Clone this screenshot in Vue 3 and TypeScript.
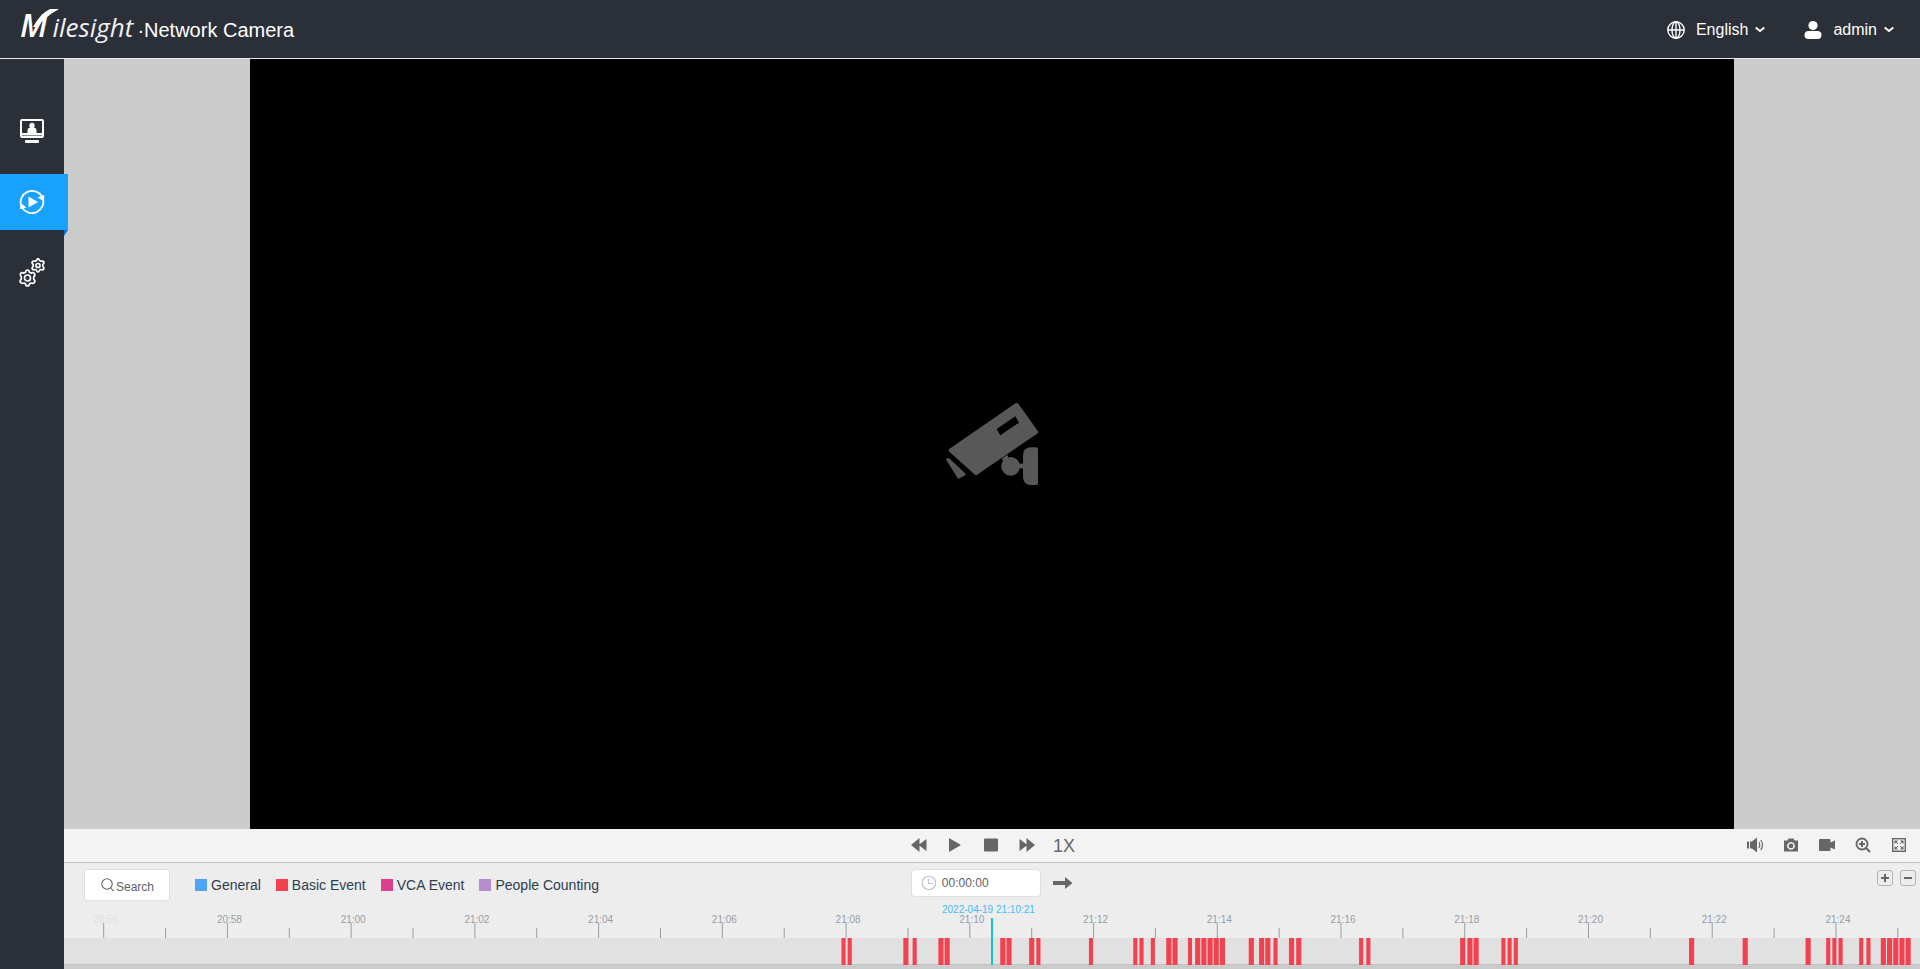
<script setup lang="ts">
import { ref } from 'vue'

interface LegendItem {
  label: string
  color: string
}

interface Tick {
  at: number
  major: boolean
  label: string
}

const legend: LegendItem[] = [
  { label: 'General', color: '#4fa5f3' },
  { label: 'Basic Event', color: '#f2424f' },
  { label: 'VCA Event', color: '#dd3f8f' },
  { label: 'People Counting', color: '#b68ed0' },
]

const language = 'English'
const user = 'admin'
const seekTime = ref('00:00:00')

// The timeline spans thirty minutes, centred on the end of the current second.
const span = 1800
const current = 21 * 3600 + 10 * 60 + 22
const start = current - span / 2

const percent = (seconds: number): string => `${(seconds / span) * 100}%`
const pad = (n: number): string => String(n).padStart(2, '0')

const ticks: Tick[] = []
for (let t = Math.ceil(start / 60) * 60; t < start + span; t += 60) {
  const minutes = t / 60
  ticks.push({
    at: t - start,
    major: minutes % 2 === 0,
    label: `${pad(Math.floor(minutes / 60))}:${pad(minutes % 60)}`,
  })
}

// Recorded events: [seconds from the left edge, duration in seconds]
const events: [number, number][] = [
  [754, 4], [760, 4], [814, 5], [823, 4], [848, 5], [854, 5], [908, 5], [914, 5],
  [936, 5], [943, 4], [994, 4], [1037, 4], [1043, 4], [1054, 4], [1069, 5], [1075, 5],
  [1090, 4], [1097, 5], [1103, 5], [1109, 5], [1115, 5], [1121, 5], [1149, 5],
  [1159, 5], [1165, 5], [1173, 4], [1188, 5], [1195, 5], [1256, 4], [1263, 4],
  [1354, 5], [1361, 5], [1367, 5], [1394, 4], [1400, 4], [1406, 4], [1576, 5],
  [1628, 5], [1689, 5], [1709, 4], [1715, 4], [1721, 4], [1741, 4], [1748, 4],
  [1762, 5], [1768, 5], [1774, 5], [1780, 5], [1786, 5],
]
</script>

<template>
  <div class="page">
    <header class="header">
      <div class="brand">
        <span class="logo">
          <span class="logo-initial">M</span>
          <svg class="swoosh" width="26" height="18" viewBox="0 0 26 18" fill="#fff"><path d="M0 18Q7 5 17 0h9Q13 7 4 18z" /></svg>
          <span>ilesight</span>
        </span>
        <span class="product">·Network Camera</span>
      </div>
      <div class="account">
        <button type="button" class="menu">
          <svg class="globe" width="18" height="18" viewBox="0 0 18 18" fill="none" stroke="#fff" stroke-width="1.4">
            <circle cx="9" cy="9" r="8.2" />
            <ellipse cx="9" cy="9" rx="4" ry="8.2" />
            <path d="M9 1v16M1 9h16" />
          </svg>
          <span>{{ language }}</span>
          <svg width="10" height="8" viewBox="0 0 10 8" fill="none" stroke="#fff" stroke-width="2"><path d="M.7 1.500 5 5 9.300 1.500" /></svg>
        </button>
        <button type="button" class="menu">
          <svg class="person" width="18" height="18" viewBox="0 0 18 18" fill="#fff">
            <circle cx="9" cy="4.6" r="4.6" />
            <rect x="0.5" y="10" width="17" height="8" rx="4" />
          </svg>
          <span>{{ user }}</span>
          <svg width="10" height="8" viewBox="0 0 10 8" fill="none" stroke="#fff" stroke-width="2"><path d="M.7 1.500 5 5 9.300 1.500" /></svg>
        </button>
      </div>
    </header>

    <div class="body">
      <nav class="sidebar">
        <a href="#live" class="nav-item" aria-label="Live view">
          <svg width="26" height="26" viewBox="0 0 26 26">
            <rect x="2" y="2" width="22" height="17" rx="1" fill="none" stroke="#fff" stroke-width="2" />
            <path d="M2 16.5h22" stroke="#fff" stroke-width="3" />
            <path d="M3 17.5h20" stroke="#8b8d92" stroke-width="1" />
            <circle cx="13" cy="7.4" r="2.6" fill="#fff" />
            <path d="M8.5 16v-3q0-3.4 3-3.4h3q3 0 3 3.4v3z" fill="#fff" />
            <rect x="6" y="22" width="14" height="3" rx="1" fill="#fff" />
          </svg>
        </a>
        <a href="#playback" class="nav-item active" aria-label="Playback">
          <svg width="26" height="26" viewBox="0 0 26 26">
            <path d="M2.200 17A11.500 11.500 0 0 1 23 7.500M23.800 9A11.500 11.500 0 0 1 3 18.500" fill="none" stroke="#fff" stroke-width="1.800" />
            <path d="M18.500 8.500 25.500 6 24.600 12zM1 20 1.800 14 7.500 18.400z" fill="#fff" />
            <path d="M9.500 7.500v11l9.500-5.500z" fill="#fff" />
          </svg>
        </a>
        <a href="#settings" class="nav-item" aria-label="Settings">
          <svg width="28" height="30" viewBox="0 0 28 30" fill="none" stroke="#fff" stroke-width="1.700" stroke-linejoin="round">
            <path d="M9.500 12q1.700 0 2 2.300l1.500.8q2.500-1 3.500.5t-.8 3.300v2.200q1.700 1.600.8 3.200t-3.500.700l-1.500.8q-.3 2.200-2 2.200t-2-2.200L6 25q-2.500.9-3.500-.7t.8-3.200v-2.200Q1.600 17.200 2.500 15.600t3.500-.5l1.500-.8q.3-2.300 2-2.300z" />
            <circle cx="9.500" cy="20" r="3" />
            <path d="M20 .8q1.200 0 1.500 1.700l1.500.8q2-.7 2.700.5t-.9 2.700v1.800q1.600 1.400.9 2.700t-2.700.5l-1.500.8q-.3 1.700-1.500 1.700t-1.500-1.700l-1.500-.8q-2 .7-2.700-.5t.9-2.700V6.500q-1.600-1.400-.9-2.700t2.700-.5l1.500-.8q.3-1.700 1.500-1.700z" />
            <circle cx="20" cy="7.500" r="2" />
          </svg>
        </a>
      </nav>

      <main class="main">
        <section class="stage">
          <div class="video">
            <svg width="94" height="84" viewBox="75 66 282 252" fill="#585858" stroke="#585858" stroke-linejoin="round">
              <path d="M290 75 348 156 168 279 92 211z" stroke-width="12" />
              <path d="M230 147 286 109 297 128 241 166z" fill="#000" stroke="none" />
              <path d="M81 238h5l48 45-18 10z" stroke-width="6" />
              <path d="M245 236 262 224 268 240 254 250z" stroke="none" />
              <circle cx="272" cy="259" r="28" stroke="none" />
              <path d="M296 251h16v14h-16z" stroke="none" />
              <path d="M334 202h14q6 0 6 6v101q0 6-6 6h-14q-25 0-25-25v-63q0-25 25-25z" stroke="none" />
            </svg>
          </div>
        </section>

        <section class="controls">
          <div class="playback">
            <button type="button" aria-label="Slower">
              <svg width="16" height="14" viewBox="0 0 16 14"><path d="M8.500 0v14L0 7zM15.500 1v12L7.500 7z" /></svg>
            </button>
            <button type="button" aria-label="Play">
              <svg width="14" height="14" viewBox="0 0 14 14"><path d="M1 0v14l12-7z" /></svg>
            </button>
            <button type="button" aria-label="Stop">
              <svg width="14" height="14" viewBox="0 0 14 14"><rect width="14" height="13" y="0.500" rx="1" /></svg>
            </button>
            <button type="button" aria-label="Faster">
              <svg width="16" height="14" viewBox="0 0 16 14"><path d="M7.500 0v14L16 7zM.5 1v12L8.500 7z" /></svg>
            </button>
            <span class="speed">1X</span>
          </div>
          <div class="tools">
            <button type="button" aria-label="Volume">
              <svg width="18" height="16" viewBox="0 0 18 16">
                <path d="M1 4.500h2v7H1zM4 4.500h2L11 .500v15L6 11.500H4z" />
                <path d="M12.800 5q2 3 0 6M14.800 3q3.500 5 0 10" fill="none" stroke="#666" stroke-width="1.200" />
              </svg>
            </button>
            <button type="button" aria-label="Snapshot">
              <svg width="14" height="14" viewBox="0 0 14 14">
                <path fill-rule="evenodd" d="M0 2.500h3.500L4.500 .500h5l1 2H14V13.500H0zM7 4a3.900 3.900 0 1 0 .01 0z" />
                <circle cx="7" cy="7.900" r="2.400" />
              </svg>
            </button>
            <button type="button" aria-label="Record">
              <svg width="16" height="12" viewBox="0 0 16 12"><path d="M1 0h9.500q1 0 1 1v2.500L16 1.500v9L11.500 8.500V11q0 1-1 1H1q-1 0-1-1V1q0-1 1-1z" /></svg>
            </button>
            <button type="button" aria-label="Digital zoom">
              <svg width="16" height="16" viewBox="0 0 16 16" fill="none" stroke="#666">
                <circle cx="7" cy="7" r="5.500" stroke-width="1.800" />
                <path d="M4 7h6M7 4v6M11 11l4 4" stroke-width="2" />
              </svg>
            </button>
            <button type="button" aria-label="Full screen">
              <svg width="14" height="14" viewBox="0 0 14 14">
                <rect x="0.700" y="0.700" width="12.600" height="12.600" fill="none" stroke="#666" stroke-width="1.400" />
                <path d="M2.500 2.500h3.500L2.500 6zM11.500 2.500v3.500L8 2.500zM2.500 11.500V8L6 11.500zM11.500 11.500H8l3.500-3.500z" />
                <path d="M4 4l2 2M10 4 8 6M4 10l2-2M10 10 8 8" stroke="#666" />
              </svg>
            </button>
          </div>
        </section>

        <section class="panel">
          <div class="toolbar">
            <div class="filters">
              <button type="button" class="search">
                <svg width="14" height="14" viewBox="0 0 14 14" fill="none" stroke="#606266" stroke-width="1.100">
                  <circle cx="7" cy="6" r="5.200" />
                  <path d="m10.500 9.500 3 3.500" />
                </svg>
                <span>Search</span>
              </button>
              <ul class="legend">
                <li v-for="item in legend" :key="item.label">
                  <i class="swatch" :style="{ background: item.color }"></i>{{ item.label }}
                </li>
              </ul>
            </div>
            <div class="seek">
              <label class="time">
                <svg width="16" height="16" viewBox="0 0 16 16" fill="none" stroke="#c0c4cc" stroke-width="1.200">
                  <circle cx="8" cy="8" r="6.800" />
                  <path d="M7.500 3.500v5H12" />
                </svg>
                <input v-model="seekTime" type="text" aria-label="Playback time" />
              </label>
              <button type="button" class="go" aria-label="Go to time">
                <svg width="20" height="12" viewBox="0 0 20 12"><path d="M0 4h12V0l7.500 6L12 12V8H0z" /></svg>
              </button>
            </div>
            <div class="zoom">
              <button type="button" aria-label="Zoom in">
                <svg width="10" height="10" viewBox="0 0 10 10" stroke="#666" stroke-width="2"><path d="M1 5h8M5 1v8" /></svg>
              </button>
              <button type="button" aria-label="Zoom out">
                <svg width="10" height="10" viewBox="0 0 10 10" stroke="#666" stroke-width="2"><path d="M1 5h8" /></svg>
              </button>
            </div>
          </div>

          <svg class="timeline" width="100%" height="68">
            <rect y="37" width="100%" height="27" fill="#e1e1e1" />
            <rect y="63" width="100%" height="1" fill="#bfc2c9" />
            <rect y="64" width="100%" height="4" fill="#cbcbcb" />
            <g v-for="tick in ticks" :key="tick.at">
              <rect :x="percent(tick.at)" :y="tick.major ? 22 : 27" width="1" :height="tick.major ? 15 : 10" fill="#979eaa" />
              <text v-if="tick.major" :x="percent(tick.at)" y="22" dx="-10" :class="tick.at < 60 ? 'faded' : 'hour'">{{ tick.label }}</text>
            </g>
            <rect v-for="[at, length] in events" :key="at" :x="percent(at)" y="37" :width="percent(length)" height="27" fill="#f2424f" />
            <svg x="50%" overflow="visible">
              <rect x="-1" y="17" width="2" height="47" fill="#14c5cb" />
            </svg>
            <text class="now" x="50%" y="12" dx="-50">2022-04-19 21:10:21</text>
          </svg>
        </section>
      </main>
    </div>
  </div>
</template>

<style>
body {
  margin: 0;
}
</style>

<style scoped>
.page {
  display: flex;
  flex-direction: column;
  min-height: 100vh;
  font-family: "Liberation Sans", Arial, sans-serif;
}
button {
  display: flex;
  align-items: center;
  justify-content: center;
  padding: 0;
  border: 0;
  background: none;
  font-family: inherit;
  cursor: pointer;
}
.header {
  display: flex;
  align-items: center;
  justify-content: space-between;
  height: 58px;
  padding: 0 26px 0 20px;
  background: #2b2f38;
  border-bottom: 1px solid #e6e6e6;
  color: #fff;
}
.brand {
  display: flex;
  align-items: baseline;
  gap: 4px;
  padding-bottom: 6px;
}
.logo {
  position: relative;
  display: flex;
  align-items: baseline;
  gap: 5px;
  font: italic 400 26px/36px "Open Sans", "Noto Sans", sans-serif;
  color: #f0f0f2;
}
.logo-initial {
  font-size: 32px;
  font-weight: 600;
  color: #fff;
}
.swoosh {
  position: absolute;
  top: 2px;
  left: 13px;
}
.product {
  font-size: 20px;
}
.account {
  display: flex;
  gap: 39px;
  padding-top: 2px;
}
.menu {
  gap: 7px;
  color: #fff;
  font-size: 16px;
}
.globe {
  margin-right: 4px;
}
.person {
  margin-right: 4px;
}
.body {
  display: flex;
  flex: 1;
}
.sidebar {
  display: flex;
  flex-direction: column;
  gap: 15px;
  width: 64px;
  padding-top: 44px;
  box-sizing: border-box;
  background: #2b2f38;
}
.nav-item {
  position: relative;
  z-index: 1;
  display: flex;
  align-items: center;
  justify-content: center;
  height: 56px;
}
.active {
  margin-right: -4px;
  padding-right: 4px;
  background: #18a1ff;
}
.active::after {
  content: "";
  position: absolute;
  top: 100%;
  right: 0;
  border-top: 6px solid #0b74d4;
  border-right: 4px solid transparent;
}
.main {
  display: flex;
  flex: 1;
  flex-direction: column;
  min-width: 0;
}
.stage {
  display: flex;
  flex: 1;
  justify-content: center;
  background: #cccccc;
}
.video {
  display: flex;
  align-items: center;
  justify-content: center;
  width: 80%;
  background: #000;
}
.controls {
  display: grid;
  grid-template-columns: 1fr auto 1fr;
  height: 33px;
  background: #f3f3f3;
  border-bottom: 1px solid #c4c4c4;
  fill: #666;
}
.playback {
  display: grid;
  grid-auto-flow: column;
  grid-auto-columns: 36px;
  grid-column: 2;
  align-items: center;
  padding: 0 2px 2px 0;
}
.speed {
  color: #666;
  font-size: 18px;
  line-height: 20px;
  text-align: center;
  padding: 2px 0 0 2px;
}
.tools {
  display: grid;
  grid-auto-flow: column;
  grid-auto-columns: 36px;
  justify-content: end;
  align-items: center;
  padding: 0 3px 2px 0;
}
.panel {
  padding-top: 6px;
  background: #ededed;
}
.toolbar {
  display: grid;
  grid-template-columns: 1fr auto 1fr;
  align-items: start;
  height: 32px;
}
.filters {
  display: flex;
  align-items: center;
  gap: 25px;
  padding-left: 20px;
}
.search {
  gap: 2px;
  width: 86px;
  height: 32px;
  background: #fff;
  border: 1px solid #dcdfe6;
  border-radius: 3px;
  color: #606266;
  font-size: 12px;
}
.search span {
  padding-top: 3px;
}
.legend {
  display: flex;
  gap: 15px;
  margin: 0;
  padding: 0;
  list-style: none;
  color: #2c3e50;
  font-size: 14px;
  line-height: 16px;
  white-space: nowrap;
}
.legend li {
  display: flex;
  align-items: center;
  gap: 4px;
}
.swatch {
  width: 12px;
  height: 12px;
}
.seek {
  display: flex;
  align-items: center;
  gap: 11px;
}
.time {
  display: flex;
  align-items: center;
  gap: 5px;
  width: 130px;
  height: 28px;
  padding: 0 9px;
  box-sizing: border-box;
  background: #fff;
  border: 1px solid #dcdfe6;
  border-radius: 4px;
}
.time input {
  width: 90px;
  min-width: 0;
  padding: 0;
  border: 0;
  outline: 0;
  background: none;
  color: #606266;
  font-family: inherit;
  font-size: 12px;
}
.go {
  width: 21px;
  fill: #666;
}
.zoom {
  display: flex;
  justify-content: flex-end;
  gap: 7px;
  padding: 1px 4px 0 0;
}
.zoom button {
  width: 16px;
  height: 16px;
  border: 1px solid #b4b4b4;
  border-radius: 3px;
}
.timeline {
  display: block;
  font-size: 10px;
}
.hour {
  fill: #979eaa;
}
.faded {
  fill: #dedfe1;
}
.now {
  fill: #44bdf7;
}
</style>
